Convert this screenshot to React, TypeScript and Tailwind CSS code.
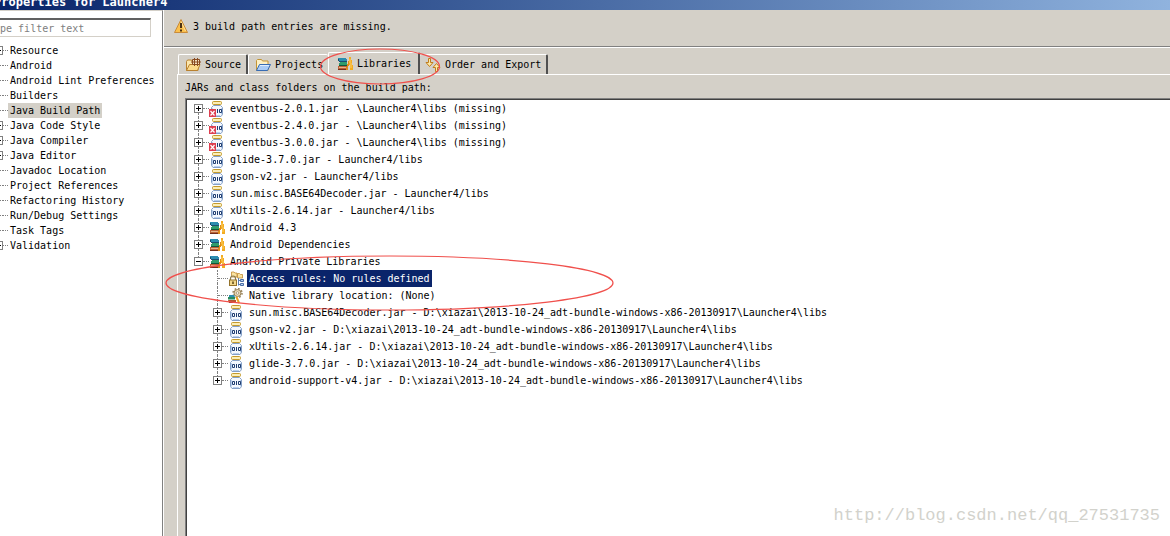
import { useState } from 'react';
import type { ReactNode } from 'react';

type IconName = 'jar' | 'missing' | 'books' | 'rules' | 'native';

interface Entry {
  label: string;
  icon: IconName;
  expandable?: boolean;
  children?: Entry[];
}

const adtLibs = 'D:\\xiazai\\2013-10-24_adt-bundle-windows-x86-20130917\\Launcher4\\libs';

const categories = [
  { label: 'Resource', expandable: true },
  { label: 'Android', expandable: false },
  { label: 'Android Lint Preferences', expandable: false },
  { label: 'Builders', expandable: false },
  { label: 'Java Build Path', expandable: false },
  { label: 'Java Code Style', expandable: true },
  { label: 'Java Compiler', expandable: true },
  { label: 'Java Editor', expandable: true },
  { label: 'Javadoc Location', expandable: false },
  { label: 'Project References', expandable: false },
  { label: 'Refactoring History', expandable: false },
  { label: 'Run/Debug Settings', expandable: false },
  { label: 'Task Tags', expandable: false },
  { label: 'Validation', expandable: true },
];

const libraries: Entry[] = [
  { label: 'eventbus-2.0.1.jar - \\Launcher4\\libs (missing)', icon: 'missing', expandable: true },
  { label: 'eventbus-2.4.0.jar - \\Launcher4\\libs (missing)', icon: 'missing', expandable: true },
  { label: 'eventbus-3.0.0.jar - \\Launcher4\\libs (missing)', icon: 'missing', expandable: true },
  { label: 'glide-3.7.0.jar - Launcher4/libs', icon: 'jar', expandable: true },
  { label: 'gson-v2.jar - Launcher4/libs', icon: 'jar', expandable: true },
  { label: 'sun.misc.BASE64Decoder.jar - Launcher4/libs', icon: 'jar', expandable: true },
  { label: 'xUtils-2.6.14.jar - Launcher4/libs', icon: 'jar', expandable: true },
  { label: 'Android 4.3', icon: 'books', expandable: true },
  { label: 'Android Dependencies', icon: 'books', expandable: true },
  {
    label: 'Android Private Libraries',
    icon: 'books',
    expandable: true,
    children: [
      { label: 'Access rules: No rules defined', icon: 'rules' },
      { label: 'Native library location: (None)', icon: 'native' },
      { label: `sun.misc.BASE64Decoder.jar - ${adtLibs}`, icon: 'jar', expandable: true },
      { label: `gson-v2.jar - ${adtLibs}`, icon: 'jar', expandable: true },
      { label: `xUtils-2.6.14.jar - ${adtLibs}`, icon: 'jar', expandable: true },
      { label: `glide-3.7.0.jar - ${adtLibs}`, icon: 'jar', expandable: true },
      { label: `android-support-v4.jar - ${adtLibs}`, icon: 'jar', expandable: true },
    ],
  },
];

function Svg({ children }: { children: ReactNode }) {
  return (
    <svg viewBox="0 0 16 16" className="w-4 h-4 shrink-0" aria-hidden="true">
      {children}
    </svg>
  );
}

function JarIcon({ missing = false }: { missing?: boolean }) {
  return (
    <Svg>
      <path d="M4.5 4.5h7l2 2v7l-1.5 2h-8l-1.500-2v-7z" fill="#f4f8fe" stroke="#86a0c6" />
      <path d="M3.500 7v6.500M12.500 7v6.500M5 14.500h6" stroke="#b9d0ee" />
      <rect x="3.500" y="0.500" width="9" height="3" rx="1" fill="#fbeeb8" stroke="#c49a2c" />
      <path d="M4.500 8.500h2v3h-2zM10.500 8.500h2v3h-2z" fill="none" stroke="#1f3d70" />
      <path d="M8.500 8v4" stroke="#1f3d70" />
      {missing && (
        <>
          <rect x="0" y="8" width="7" height="8" fill="#dd3f50" />
          <path d="M1.500 10l4 4.500M5.500 10l-4 4.500" stroke="#fff" strokeWidth="1.2" />
        </>
      )}
    </Svg>
  );
}

function BooksIcon() {
  return (
    <Svg>
      <path d="M1 2h8v1h1v3H2V5H1z" fill="#2b8db0" />
      <path d="M2 5h8v1H2z" fill="#1b4e70" />
      <path d="M1 3h1v2H1z" fill="#1b4e70" />
      <path d="M3 6h7v3H2V7h1z" fill="#2f9c6c" />
      <path d="M2 9h8v1H2z" fill="#11573a" />
      <path d="M1 10h9v3H1z" fill="#bd6238" />
      <path d="M2 11h8v1H2z" fill="#e5b58c" />
      <path d="M1 13h10v1H1z" fill="#74301c" />
      <path d="M12 1h2v3h1v5h1v5h-3V9h-1z" fill="#f3ac20" />
      <path d="M11 5h1v5h-1v4h-2v-3h1V8h1z" fill="#e08c17" />
      <path d="M13 3v4M14 7v5" stroke="#fcd876" strokeWidth=".8" />
    </Svg>
  );
}

function RulesIcon() {
  return (
    <Svg>
      <path d="M3.500 1h2.500l1 1h2v4h-5.500zM9.500 2.500h2l1 1h2v3.500h-5z" fill="#fbe3a0" stroke="#c08a35" strokeWidth=".8" />
      <path d="M2.500 10V7.500a2.500 2.500 0 0 1 5 0V10" fill="none" stroke="#8a7a50" strokeWidth="1.200" />
      <rect x="1.500" y="9" width="7" height="5.500" fill="#f3d98c" stroke="#94722a" />
      <path d="M5 10.500v2.500" stroke="#5b4515" strokeWidth="1.500" />
      <path d="M10.500 7v7.500M10.500 9.500h2M10.500 13.500h2" fill="none" stroke="#5c7fb5" />
      <path d="M12.500 8.500h3v2h-3zM12.500 12.500h3v2h-3z" fill="#b8d0f0" stroke="#4b6fa8" />
    </Svg>
  );
}

function NativeIcon() {
  return (
    <Svg>
      <circle cx="9.500" cy="5" r="3.500" fill="#ead9b5" stroke="#99835a" />
      <circle cx="9.500" cy="5" r="4.500" fill="none" stroke="#99835a" strokeWidth="1.500" strokeDasharray="1.700 1.830" />
      <circle cx="9.500" cy="5" r="1.300" fill="#fff" stroke="#99835a" strokeWidth=".7" />
      <path d="M1 7h5l1 2H1z" fill="#2b8db0" />
      <path d="M0 9h7v2.500H0z" fill="#2a8c5c" />
      <path d="M0 12h8v3H1z" fill="#b45530" />
      <path d="M1 14.500h8" stroke="#74301c" />
      <path d="M8.500 9l2.500 6" stroke="#efa41d" strokeWidth="2" />
    </Svg>
  );
}

function EntryIcon({ name }: { name: IconName }) {
  if (name === 'books') return <BooksIcon />;
  if (name === 'rules') return <RulesIcon />;
  if (name === 'native') return <NativeIcon />;
  return <JarIcon missing={name === 'missing'} />;
}

function SourceIcon() {
  return (
    <Svg>
      <path d="M1.500 13.500V4.500l1-1.500h4l1 1.500H13v9z" fill="#fbe6ae" stroke="#b9812f" />
      <path d="M1.500 13.500l3-6h10.500l-2.500 6z" fill="#fcd98a" stroke="#b9812f" />
      <path d="M7.500 2.500h7v5h-7z" fill="#f5e2c4" stroke="#8a4b20" />
      <path d="M9.500 1v8M12.500 1v8M6 5h10" stroke="#8a4b20" />
    </Svg>
  );
}

function ProjectsIcon() {
  return (
    <Svg>
      <path d="M1.500 13.500V3.500l1-1h4l1 1.500h5.500v9.500z" fill="#fdf0c4" stroke="#c39434" />
      <path d="M1.500 13.500l3-6h11l-3 6z" fill="#a9cbf5" stroke="#376cb4" />
      <path d="M5 8.500h9" stroke="#e0eefc" />
    </Svg>
  );
}

function OrderIcon() {
  return (
    <Svg>
      <path d="M3.500 1.500h2v4h2.500L4.500 9.500 1 5.500h2.500z" fill="#fde9a6" stroke="#c07c1b" />
      <path d="M10.500 14.500h2v-4H15l-3.500-4-3.500 4h2.500z" fill="#fde9a6" stroke="#c07c1b" />
    </Svg>
  );
}

function WarningIcon() {
  return (
    <Svg>
      <path d="M8 1.500l6.500 13h-13z" fill="#fbc04c" stroke="#c98b3a" strokeLinejoin="round" />
      <path d="M8 3.500l4.500 9.500" stroke="#fde3a0" />
      <path d="M8 5v5M8 11.500v2" stroke="#4c3113" strokeWidth="2" />
    </Svg>
  );
}

function Toggle({ open, label, onClick }: { open: boolean; label: string; onClick?: () => void }) {
  return (
    <button
      type="button"
      aria-label={label}
      onClick={onClick}
      className="block w-[9px] h-[9px] shrink-0 border border-[#808080] bg-white"
    >
      <svg viewBox="0 0 7 7" className="block w-[7px] h-[7px]" aria-hidden="true">
        <path d={open ? 'M1 3.5h5' : 'M1 3.5h5M3.5 1v5'} stroke="#000" />
      </svg>
    </button>
  );
}

interface RowProps {
  entry: Entry;
  first?: boolean;
  last?: boolean;
  open?: boolean;
  selected: string;
  onSelect: (label: string) => void;
  onToggle?: () => void;
}

function TreeRow({ entry, first, last, open = false, selected, onSelect, onToggle }: RowProps) {
  return (
    <div className="flex items-center h-[17px]">
      <div className="flex flex-col items-center w-[9px] h-full shrink-0">
        <span className={`flex-1 w-px border-l border-dotted ${first ? 'border-transparent' : 'border-[#808080]'}`} />
        {entry.expandable ? (
          <Toggle open={open} label={`Toggle ${entry.label}`} onClick={onToggle} />
        ) : (
          <span className="h-[9px] w-px border-l border-dotted border-[#808080]" />
        )}
        <span className={`flex-1 w-px border-l border-dotted ${last ? 'border-transparent' : 'border-[#808080]'}`} />
      </div>
      <span className={`h-px border-t border-dotted border-[#808080] shrink-0 ${entry.expandable ? 'w-[6px]' : 'w-[10px] -ml-1'}`} />
      <EntryIcon name={entry.icon} />
      <button
        type="button"
        onClick={() => onSelect(entry.label)}
        className={`ml-[3px] px-[2px] h-[17px] leading-[17px] whitespace-nowrap ${
          selected === entry.label ? 'bg-[#0a246a] text-white' : ''
        }`}
      >
        {entry.label}
      </button>
    </div>
  );
}

function LibraryTree() {
  const [open, setOpen] = useState(true);
  const [selected, setSelected] = useState('Access rules: No rules defined');

  return (
    <ul className="pl-[7px]">
      {libraries.map((entry, i) => (
        <li key={entry.label}>
          <TreeRow
            entry={entry}
            first={i === 0}
            last={i === libraries.length - 1}
            open={open && !!entry.children}
            selected={selected}
            onSelect={setSelected}
            onToggle={entry.children ? () => setOpen(!open) : undefined}
          />
          {entry.children && open && (
            <ul className="pl-[19px]">
              {entry.children.map((child, j) => (
                <li key={child.label}>
                  <TreeRow
                    entry={child}
                    last={j === entry.children!.length - 1}
                    selected={selected}
                    onSelect={setSelected}
                  />
                </li>
              ))}
            </ul>
          )}
        </li>
      ))}
    </ul>
  );
}

function Sidebar() {
  const [selected, setSelected] = useState('Java Build Path');

  return (
    <aside className="w-[164px] shrink-0 bg-white border-r border-white overflow-hidden">
      <div className="h-full pt-[7px] border-r border-t border-r-[#808080] border-t-[#d4d0c8]">
        <input
          type="text"
          aria-label="type filter text"
          placeholder="type filter text"
          className="block w-[165px] h-[19px] -ml-[14px] pl-[2px] border-t-2 border-t-[#606060] border-r border-b border-r-[#d4d0c8] border-b-[#d4d0c8] placeholder:text-[#808080] outline-none"
        />
        <ul className="-ml-[6px] mt-[6px]">
          {categories.map(({ label, expandable }) => (
            <li key={label} className="flex items-center h-[15px]">
              {expandable ? (
                <Toggle open={false} label={`Toggle ${label}`} />
              ) : (
                <span className="w-[9px] border-t border-dotted border-[#808080]" />
              )}
              <span className="w-[5px] border-t border-dotted border-[#808080]" />
              <button
                type="button"
                onClick={() => setSelected(label)}
                className={`px-[2px] h-[15px] leading-[15px] whitespace-nowrap ${selected === label ? 'bg-[#d4d0c8]' : ''}`}
              >
                {label}
              </button>
            </li>
          ))}
        </ul>
      </div>
    </aside>
  );
}

const tabs = [
  { label: 'Source', icon: <SourceIcon />, style: 'w-[70px] pl-[6px] border-l border-r-2' },
  { label: 'Projects', icon: <ProjectsIcon />, style: 'w-[80px] pl-[6px] border-l' },
  { label: 'Libraries', icon: <BooksIcon />, style: 'w-[92px] pl-[8px] border-l border-r-2' },
  { label: 'Order and Export', icon: <OrderIcon />, style: 'w-[128px] pl-[5px] border-r-2' },
];

export default function App() {
  const [tab, setTab] = useState('Libraries');

  return (
    <div className="relative flex flex-col min-h-screen overflow-hidden bg-[#d4d0c8] text-black text-[10px] leading-[15px] font-['DejaVu_Sans_Mono','Liberation_Mono',monospace]">
      <header className="h-[10px] overflow-hidden bg-linear-to-r from-[#0a246a] to-[#90b3de]">
        <h1 className="-ml-[6px] -mt-[6px] text-[12px] leading-[16px] font-bold text-white whitespace-nowrap">
          Properties for Launcher4
        </h1>
      </header>

      <div className="flex flex-1">
        <Sidebar />

        <main className="flex flex-col flex-1 min-w-0">
          <div className="flex items-center gap-1 h-[37px] pl-[9px] pb-1 border-b border-[#808080]">
            <WarningIcon />
            <p>3 build path entries are missing.</p>
          </div>

          <div className="flex items-end h-[27px] pl-[14px] border-t border-white">
            {tabs.map(({ label, icon, style }) => (
              <button
                key={label}
                type="button"
                onClick={() => setTab(label)}
                className={`flex items-center gap-1 shrink-0 whitespace-nowrap border-t border-t-white border-l-white border-r-[#505050] rounded-t-[2px] ${style} ${
                  tab === label ? 'h-[22px]' : 'h-[20px]'
                }`}
              >
                {icon}
                {label}
              </button>
            ))}
          </div>

          <section className="flex flex-col flex-1 ml-[13px] pl-[7px] border-l border-t border-white">
            <h2 className="h-[23px] pt-[5px]">JARs and class folders on the build path:</h2>
            <div className="flex-1 border-l border-t border-[#808080]">
              <div className="h-full bg-white border-l border-t border-[#404040]">
                <LibraryTree />
              </div>
            </div>
          </section>
        </main>
      </div>

      <p className="absolute right-[10px] bottom-[8px] text-[17px] leading-[24px] text-[#d2d2cc] font-['Liberation_Mono',monospace]">
        http://blog.csdn.net/qq_27531735
      </p>

      {/* red marker rings */}
      <svg className="absolute left-0 top-0 w-[640px] h-[320px] pointer-events-none" viewBox="0 0 640 320" aria-hidden="true">
        <ellipse cx="380" cy="66.500" rx="59.500" ry="17.500" fill="none" stroke="#f0504c" strokeWidth="1.200" />
        <ellipse cx="389.500" cy="283" rx="223.500" ry="27" fill="none" stroke="#f0504c" strokeWidth="1.200" />
      </svg>
    </div>
  );
}
